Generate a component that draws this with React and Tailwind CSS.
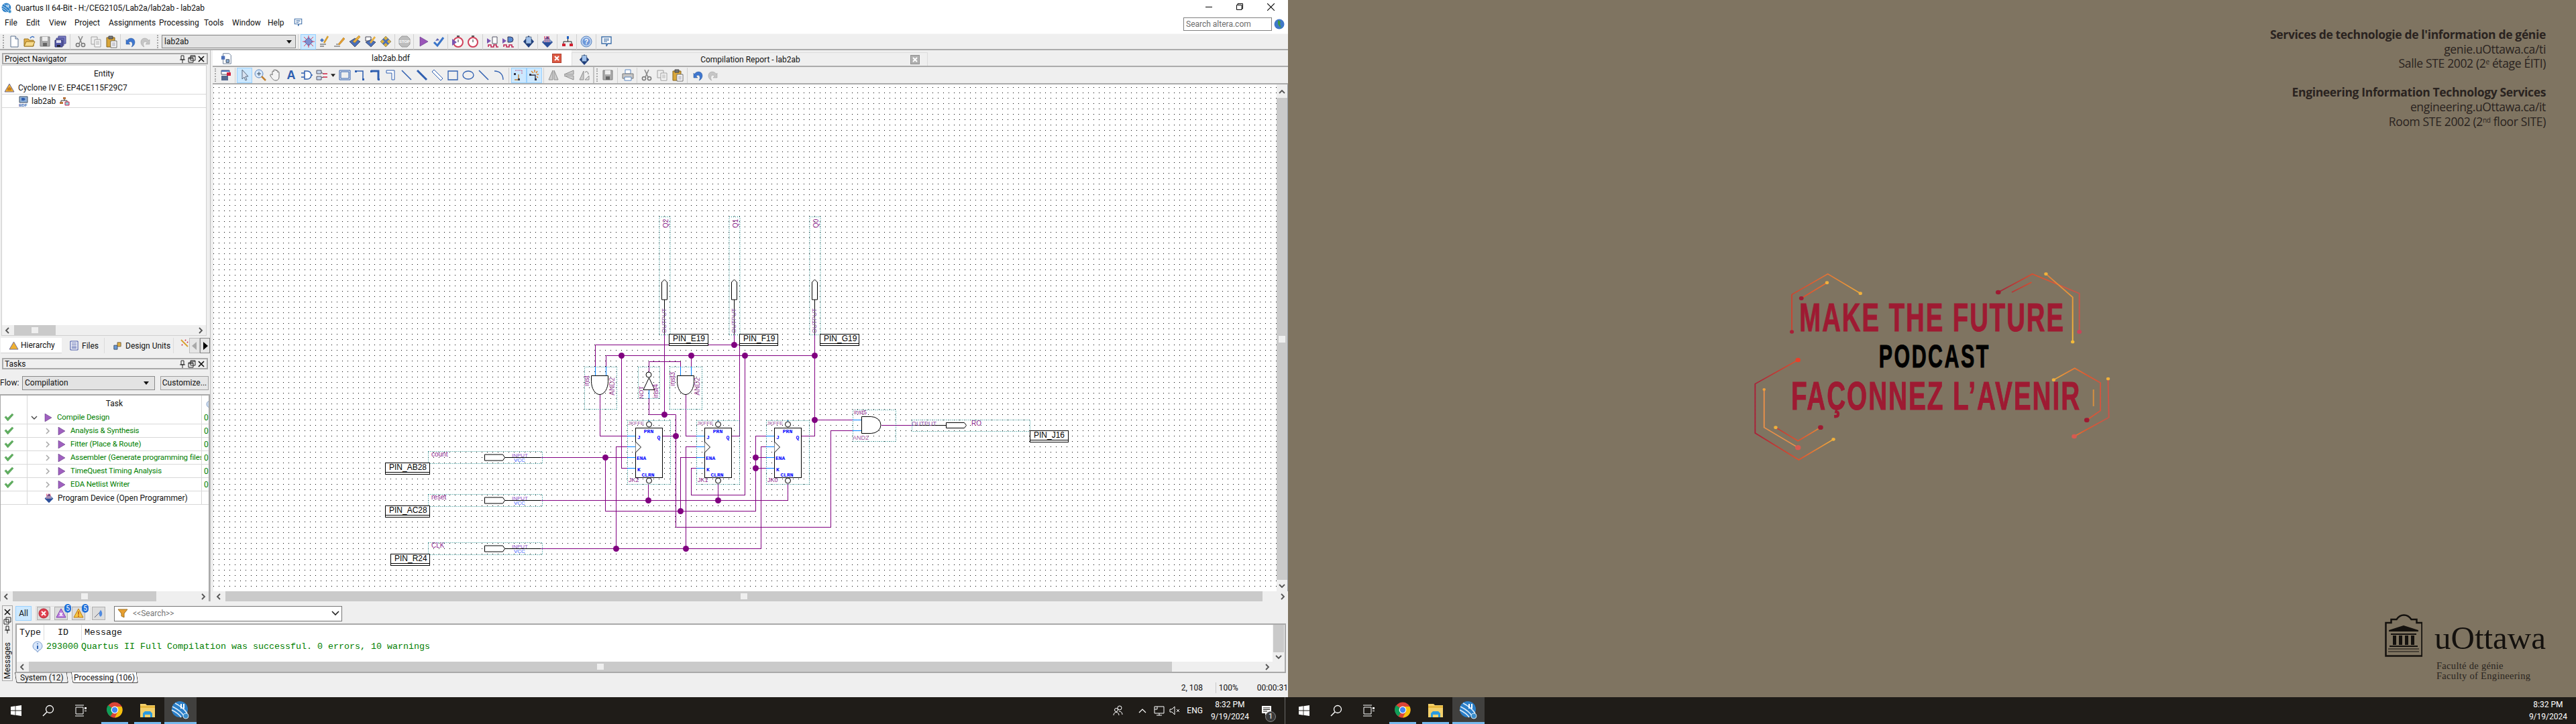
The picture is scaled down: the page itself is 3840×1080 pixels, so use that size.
import React from "react";

const WIRE = "#800080";
const PORT = "#0080ff";
const TEAL = "#008080";

const I = {
  new: <><path d="M5 2h7l4 4v12H5z" fill="#fff" stroke="#5d7390" /><path d="M12 2v4h4" fill="#dfe5ee" stroke="#5d7390" /></>,
  open: <><path d="M2 6h6l2 2h6v9H2z" fill="#e3b04b" stroke="#9a7420" /><path d="M2 17l3-7h13l-3 7z" fill="#f6d98a" stroke="#9a7420" /><path d="M11 5c2-3 4-3 6-1" fill="none" stroke="#3a6fc0" strokeWidth="1.5" /></>,
  save: <><path d="M3 3h14v14H3z" fill="#a9a9a9" stroke="#808080" /><path d="M6 3h8v6H6z" fill="#eee" /><path d="M7 12h6v5H7z" fill="#666" /></>,
  saveAll: <><path d="M7 2h11v11H7z" fill="#7c7fc4" stroke="#44478e" /><path d="M4 5h11v11H4z" fill="#6d70b8" stroke="#44478e" /><path d="M2 8h11v10H2z" fill="#5559a8" stroke="#33366e" /><path d="M4 8h7v4H4z" fill="#dde" /><path d="M5 15h5v3H5z" fill="#223" /></>,
  cut: <><path d="M7 2l5 11M13 2L8 13" stroke="#8a8a8a" strokeWidth="1.6" fill="none" /><circle cx="6" cy="15" r="2.6" fill="none" stroke="#777" strokeWidth="1.5" /><circle cx="14" cy="15" r="2.6" fill="none" stroke="#777" strokeWidth="1.5" /></>,
  copy: <><path d="M3 3h9v11H3z" fill="#eee" stroke="#a0a0a0" /><path d="M8 7h9v11H8z" fill="#f7f7f7" stroke="#a0a0a0" /><path d="M10 10h5M10 12h5M10 14h5" stroke="#b0b0b0" /></>,
  paste: <><path d="M3 4h12v14H3z" fill="#d9a63a" stroke="#86651a" /><path d="M6 2h6v4H6z" fill="#777" stroke="#444" /><path d="M9 9h9v10H9z" fill="#fff" stroke="#707070" /><path d="M11 12h5M11 14h5M11 16h5" stroke="#99a" /></>,
  undo: <path d="M5 9c3-6 12-5 12 2 0 3-2 6-5 7 2-2 2-7-1-8-2 0-3 1-3 2l2 2H4V7z" fill="#3f77d0" stroke="#2a558f" strokeWidth=".5" />,
  redo: <path d="M15 9C12 3 3 4 3 11c0 3 2 6 5 7-2-2-2-7 1-8 2 0 3 1 3 2l-2 2h6V7z" fill="#c6c6c6" stroke="#9a9a9a" strokeWidth=".5" />,
  compile: <><path d="M10 3l7 7-7 7-7-7z" fill="#5b7fc8" /><path d="M3 3l14 14M17 3L3 17M10 1v18M1 10h18" stroke="#e0405a" strokeWidth="1" /><circle cx="10" cy="10" r="4" fill="#7d8fd0" /></>,
  wand: <><path d="M7 5l-3 3 3 3 3-3z" fill="#4a78c0" /><path d="M10 12L16 2" stroke="#d8a030" strokeWidth="2.5" /><path d="M4 14h9M4 17h6" stroke="#444" /></>,
  pencil: <><path d="M8 14L16 4l2 2-8 9z" fill="#e8a030" stroke="#a87010" strokeWidth=".6" /><path d="M2 17h9M5 14h3" stroke="#555" /></>,
  chipPen: <><path d="M2 10l8-5 8 5-8 8z" fill="#4a6fb8" stroke="#223" strokeWidth=".6" /><path d="M7 10L16 1l2 2-8 9z" fill="#e8b040" stroke="#a87010" strokeWidth=".6" /></>,
  chipTag: <><path d="M3 3h8v6H3z" fill="#fff" stroke="#445" /><path d="M3 11l8-4 7 4-7 7z" fill="#4a6fb8" stroke="#223" strokeWidth=".6" /><path d="M9 11l7-9 2 2-7 9z" fill="#e8b040" /></>,
  chipGold: <><path d="M10 2l8 8-8 8-8-8z" fill="#d8b040" stroke="#665" strokeWidth=".6" /><path d="M6 6l8 8M14 6l-8 8" stroke="#4a6fb8" strokeWidth="2.5" /></>,
  stop: <><path d="M6 2h8l4 4v8l-4 4H6l-4-4V6z" fill="#bdbdbd" stroke="#9a9a9a" /><text x="10" y="12" textAnchor="middle" className="font-['Liberation_Sans'] text-[6px] font-bold fill-white">STOP</text></>,
  play: <path d="M5 3l12 7-12 7z" fill="#9a55b8" stroke="#5a3080" strokeWidth=".6" />,
  check: <><path d="M3 11l5 5L17 4" fill="none" stroke="#3a74c8" strokeWidth="3" /><path d="M5 9l3-4 3 3" fill="#5a60b0" /></>,
  timerA: <><circle cx="11" cy="11" r="7" fill="#fff" stroke="#d0405a" strokeWidth="2" /><path d="M2 6l7 5-7 5z" fill="#7a55b0" /><path d="M9 2h4" stroke="#555" strokeWidth="2" /><path d="M11 7v4" stroke="#333" /></>,
  timerB: <><circle cx="10" cy="11" r="7" fill="#fff" stroke="#d0405a" strokeWidth="2" /><path d="M8 2h4" stroke="#555" strokeWidth="2" /><path d="M10 7v4" stroke="#333" /></>,
  simA: <><path d="M1 5l6 4-6 4z" fill="#7a55b0" /><path d="M9 3h7v10H9z" fill="#fff" stroke="#556" /><path d="M3 18v-3h4v3h4v-3h4v3h3" fill="none" stroke="#c02050" strokeWidth="1.5" /></>,
  simB: <><path d="M1 5l6 4-6 4z" fill="#7a55b0" /><path d="M9 3h4a4 4 0 010 8H9z" fill="#5a8ad0" stroke="#335" /><path d="M3 18v-3h4v3h4v-3h4v3h3" fill="none" stroke="#c02050" strokeWidth="1.5" /></>,
  prog: <><path d="M10 1l8 9-8 9-8-9z" fill="#1f3f80" /><path d="M6 3h8v10H6z" fill="#9fc0ec" stroke="#345" strokeWidth=".6" /></>,
  progStripe: <><path d="M10 2l8 9-8 8-8-8z" fill="#2b4f9a" /><path d="M6 2v9M9 2v9M12 2v9" stroke="#d03060" strokeWidth="1.2" /><path d="M4 6h12v5H4z" fill="#fff" fillOpacity=".4" /></>,
  tree: <><path d="M9 2h3v4H9zM2 13h5v4H2zM13 13h5v4h-5z" fill="#d02030" /><path d="M9 2h3v4H9z" fill="#2060c0" /><path d="M10.5 6v4M4 13v-3h12v3" stroke="#222" fill="none" /></>,
  help: <><circle cx="10" cy="10" r="8" fill="#b8cfee" stroke="#5b85c0" /><circle cx="10" cy="10" r="5.5" fill="#6d97d8" /><text x="10" y="13.5" textAnchor="middle" className="font-['Liberation_Sans'] text-[10px] font-bold fill-white">?</text></>,
  chat: <><path d="M3 3h14v10h-5l-2 4v-4H3z" fill="#fff" stroke="#3d6ea8" strokeWidth="1.4" /><path d="M6 6h8M6 8h8M6 10h5" stroke="#3d6ea8" /></>,
  docChip: <><path d="M4 2h10l3 3v14H4z" fill="#fff" stroke="#5d7390" /><path d="M1 6h6v6H1z" fill="#4a6fb8" /><path d="M9 12h5v5H9z" fill="#8fb0d8" stroke="#345" /></>,
  schemSave: <><path d="M3 3h12v6H3z" fill="#fff" stroke="#556" /><path d="M3 3h12v2H3z" fill="#4a6fb8" /><path d="M11 6h6v5h-6z" fill="#d02040" /><path d="M3 11h10v7H3z" fill="#556a90" /></>,
  arrow: <path d="M6 2v14l3-3 2 5 2-1-2-5h4z" fill="#d8e2f0" stroke="#5a6a80" />,
  zoom: <><circle cx="8" cy="8" r="6" fill="#d8e8fb" stroke="#5a86c0" /><path d="M5 8h6M8 5v6" stroke="#345" /><path d="M12 12l6 6" stroke="#c08030" strokeWidth="2.5" /></>,
  hand: <path d="M5 10V5a1 1 0 012 0V3a1 1 0 012 0V3a1 1 0 012 0v1a1 1 0 012 0v2a1 1 0 012 0v7c0 3-2 5-5 5-4 0-6-4-8-7-1-2 1-3 3-1z" fill="#f4f4f4" stroke="#6c6c6c" />,
  letter: <text x="10" y="16" textAnchor="middle" className="font-['Liberation_Sans'] text-[18px] font-bold fill-[#2f5fb0]">A</text>,
  gate: <><path d="M7 4h4a6 6 0 010 12H7z" fill="#fff" stroke="#2f5fb0" strokeWidth="1.5" /><path d="M2 7h5M2 13h5M17 10h2" stroke="#2f5fb0" strokeWidth="1.5" /></>,
  blocks: <><path d="M2 3h7v5H2zM2 12h7v5H2z" fill="#c8d8ee" stroke="#556" /><path d="M11 8h7" stroke="#d02040" strokeWidth="1.5" /><path d="M11 13h7" stroke="#d02040" strokeWidth="1.5" /><path d="M9 6l3 2M9 14l3-1" stroke="#556" /></>,
  symbol: <><path d="M2 3h16v14H2z" fill="none" stroke="#2f5fb0" /><path d="M4 5h12v10H4z" fill="none" stroke="#2f5fb0" /></>,
  ortho: <><path d="M3 4h11v13" fill="none" stroke="#2f5fb0" strokeWidth="1.5" /><path d="M2 3h3v3H2zM13 15h3v3h-3z" fill="#2f5fb0" /></>,
  orthoB: <><path d="M3 4h11v13" fill="none" stroke="#2f5fb0" strokeWidth="3" /><path d="M2 3h3v3H2zM13 15h3v3h-3z" fill="#2f5fb0" /></>,
  orthoC: <><path d="M3 3h12v14h-4V7H3z" fill="#fff" stroke="#2f5fb0" /></>,
  diag: <path d="M3 3l14 14" stroke="#2f5fb0" strokeWidth="1.5" />,
  diagB: <path d="M3 3l14 14" stroke="#2f5fb0" strokeWidth="3" />,
  diagC: <path d="M2 5l3-3 13 13-3 3z" fill="#fff" stroke="#2f5fb0" />,
  rect: <path d="M3 4h14v13H3z" fill="none" stroke="#2f5fb0" strokeWidth="1.3" />,
  ell: <ellipse cx="10" cy="10" rx="8" ry="6" fill="none" stroke="#2f5fb0" strokeWidth="1.3" />,
  arc: <path d="M3 4c8 0 13 5 13 13" fill="none" stroke="#2f5fb0" strokeWidth="1.3" />,
  rubber: <><path d="M4 3h10v6" fill="none" stroke="#c02050" strokeDasharray="1 1" /><path d="M9 9v8H3" fill="none" stroke="#c08030" strokeWidth="1.4" /><path d="M2 7h3v3H2zM8 15h3v3H8z" fill="#334" /></>,
  partial: <><path d="M3 10h8v8" fill="none" stroke="#334" strokeWidth="1.4" /><path d="M2 8h3v3H2zM10 15h3v3h-3z" fill="#334" /><path d="M10 2v4M14 4l-2 3M16 9h-3M15 14l-2-2M5 4l3 3" stroke="#e08020" strokeWidth="1.4" /></>,
  flipH: <path d="M9 3v14H3zM11 3v14h6z" fill="#ccc" stroke="#909090" />,
  flipV: <path d="M17 3v6H3zM17 17v-6H3z" fill="#ccc" stroke="#909090" />,
  rotate: <><path d="M9 4v13H3z" fill="#ccc" stroke="#909090" /><path d="M17 17h-6l6-6z" fill="#ddd" stroke="#909090" /><path d="M11 6c3-3 5 0 5 3" fill="none" stroke="#777" /></>,
  print: <><path d="M6 2h8v6H6z" fill="#fff" stroke="#5a86c0" /><path d="M2 8h16v7H2z" fill="#c6c6c6" stroke="#777" /><path d="M5 13h10v5H5z" fill="#fff" stroke="#5a86c0" /></>,
};

const Icon = ({ name, className = "w-5 h-5" }) => (
  <svg viewBox="0 0 20 20" className={className}>{I[name]}</svg>
);

const Tool = ({ name, active }) => (
  <div className={`w-[23px] h-[23px] shrink-0 flex items-center justify-center border ${active ? "bg-[#cce8ff] border-[#99d1ff]" : "border-transparent"}`}>
    <Icon name={name} />
  </div>
);

const Sep = ({ wide }) => (
  <div className={`${wide ? "w-[7px]" : "w-[5px]"} h-[23px] shrink-0 flex justify-center`}>
    <div className="w-px h-full bg-[#d0d0d0]" />
  </div>
);

const Grip = ({ className = "" }) => (
  <div className={`w-[2px] h-[20px] shrink-0 border-l-2 border-dotted border-[#a8a8a8] ${className}`} />
);

const PanelHead = ({ title }) => (
  <div className="flex items-center h-[17px] mx-[3px] pl-[2px] pr-[2px] border-2 border-[#a9a9a9] bg-[#efefef]">
    <span className="flex-1 text-[12px] leading-none">{title}</span>
    <DockIcons />
  </div>
);

const DockIcons = () => (
  <div className="flex items-center gap-[2px] h-3">
    <svg viewBox="0 0 12 12" className="w-3 h-3"><path d="M4 1h4v6H4zM2 7h8M6 7v5" fill="none" stroke="#222" /></svg>
    <svg viewBox="0 0 12 12" className="w-3 h-3"><path d="M4 1h7v7H4zM1 4h7v7H1z" fill="#efefef" stroke="#222" /><path d="M1 5h7M4 2h7" stroke="#222" /></svg>
    <svg viewBox="0 0 12 12" className="w-3 h-3"><path d="M2 2l8 8M10 2l-8 8" stroke="#111" strokeWidth="1.7" /></svg>
  </div>
);

const GreenCheck = () => (
  <svg viewBox="0 0 16 14" className="w-[15px] h-[13px]">
    <path d="M1 7l2-2 3 3 7-7 2 2-9 10z" fill="#5fae5f" stroke="#3f8f3f" strokeWidth=".5" />
  </svg>
);

const PlayTri = () => (
  <svg viewBox="0 0 12 12" className="w-[12px] h-[12px] shrink-0">
    <path d="M1 0l10 6-10 6z" fill="#a060c0" stroke="#4e2a70" strokeWidth=".5" />
  </svg>
);

const tasks = [
  { name: "Compile Design", top: true },
  { name: "Analysis & Synthesis" },
  { name: "Fitter (Place & Route)" },
  { name: "Assembler (Generate programming files)" },
  { name: "TimeQuest Timing Analysis" },
  { name: "EDA Netlist Writer" },
];

const TaskRow = ({ t }) => (
  <div className="flex h-5 border-b border-[#d8d8d8]">
    <div className="w-[40px] shrink-0 border-r border-[#d8d8d8] flex items-center pl-[5px]"><GreenCheck /></div>
    <div className={`w-[260px] shrink-0 border-r border-[#d8d8d8] flex items-center whitespace-nowrap text-[#008000] text-[11.5px] tracking-[-0.15px] overflow-hidden ${t.top ? "pl-[5px]" : "pl-[25px]"}`}>
      <svg viewBox="0 0 10 10" className="w-[10px] h-[10px] shrink-0 mr-[10px]">
        {t.top ? <path d="M1 3l4 4 4-4" fill="none" stroke="#444" strokeWidth="1.4" /> : <path d="M3 1l4 4-4 4" fill="none" stroke="#aaa" strokeWidth="1.6" />}
      </svg>
      <PlayTri />
      <span className="ml-[7px]">{t.name}</span>
    </div>
    <div className="flex-1 overflow-hidden pl-[3px] text-[#008000] flex items-center">00</div>
  </div>
);

const Scroll = ({ className = "", thumb = "", grip = true }) => (
  <div className={`h-[15px] flex items-center bg-[#efefef] ${className}`}>
    <svg viewBox="0 0 10 10" className="w-[10px] h-[10px] mx-[3px] shrink-0"><path d="M7 1L3 5l4 4" fill="none" stroke="#555" strokeWidth="1.8" /></svg>
    <div className={`h-full bg-[#cacaca] flex items-center justify-center ${thumb}`}>
      {grip && <div className="w-[10px] h-[9px] bg-[#efefef]" />}
    </div>
    <div className="flex-1" />
    <svg viewBox="0 0 10 10" className="w-[10px] h-[10px] mx-[3px] shrink-0"><path d="M3 1l4 4-4 4" fill="none" stroke="#555" strokeWidth="1.8" /></svg>
  </div>
);

const WinLogo = () => (
  <svg viewBox="0 0 16 16" className="w-4 h-4"><path d="M0 2.2l6.6-.9v6.3H0zM7.4 1.2L16 0v7.6H7.4zM0 8.4h6.6v6.3L0 13.8zM7.4 8.4H16V16l-8.6-1.2z" fill="#fff" /></svg>
);

const Chrome = () => (
  <svg viewBox="0 0 24 24" className="w-6 h-6">
    <circle cx="12" cy="12" r="11.5" fill="#db4437" />
    <path d="M12 12L3 19a11.5 11.5 0 01-1-14z" fill="#0f9d58" />
    <path d="M2.2 5.8L12 12l-6.4 9.5A11.5 11.5 0 012.2 5.8z" fill="#0f9d58" />
    <path d="M12 7h10.5A11.5 11.5 0 0112 23.5L17 14z" fill="#f4c20d" />
    <circle cx="12" cy="12" r="5.4" fill="#fff" />
    <circle cx="12" cy="12" r="4.2" fill="#4285f4" />
  </svg>
);

const Folder = () => (
  <svg viewBox="0 0 24 24" className="w-6 h-6">
    <path d="M1 3h8l2 2h12v18H1z" fill="#f3d06b" />
    <path d="M1 6h22v3H1z" fill="#e8b83f" />
    <path d="M8 14h8l3 3v6h-3v-4H8v4H5v-6z" fill="#2b9be0" />
  </svg>
);

const QuartusLogo = ({ className = "w-7 h-7" }) => (
  <svg viewBox="0 0 28 28" className={className}>
    <circle cx="13" cy="13" r="12" fill="#2b7fc8" />
    <path d="M2 9c8 4 14 8 18 15M1 14c6 3 11 6 14 11M6 4c8 4 14 9 18 15" fill="none" stroke="#dfeefa" strokeWidth="1.5" />
    <path d="M14 5h2v7h-2zM18 5h2v7h-2z" fill="#fff" />
    <circle cx="22" cy="23" r="4" fill="#3a8cc8" stroke="#cfe6f6" />
  </svg>
);

const SearchGlass = () => (
  <svg viewBox="0 0 18 18" className="w-[18px] h-[18px]"><circle cx="11" cy="7" r="5.5" fill="none" stroke="#fff" strokeWidth="1.3" /><path d="M7 11l-6 6" stroke="#fff" strokeWidth="1.5" /></svg>
);

const TaskView = () => (
  <svg viewBox="0 0 18 18" className="w-[18px] h-[18px]"><path d="M2 4h11v10H2zM1 1h13M1 17h13" fill="none" stroke="#fff" /><path d="M15 4h3v3h-3zM15 9h3v1h-3z" fill="#fff" /></svg>
);

const TaskApps = () => (
  <div className="flex h-full">
    <div className="w-[48px] flex items-center justify-center"><WinLogo /></div>
    <div className="w-[48px] flex items-center justify-center"><SearchGlass /></div>
    <div className="w-[48px] flex items-center justify-center"><TaskView /></div>
    <div className="w-[40px] ml-[7px] flex items-center justify-center border-b-[3px] border-[#76b9ed]"><Chrome /></div>
    <div className="w-[40px] ml-[9px] flex items-center justify-center border-b-[3px] border-[#76b9ed]"><Folder /></div>
    <div className="w-[48px] ml-[5px] flex items-center justify-center border-b-[3px] border-[#76b9ed] bg-[#41403e]"><QuartusLogo /></div>
  </div>
);

const Clock = () => (
  <div className="flex flex-col items-center text-white text-[12px] leading-[18px]">
    <span>8:32 PM</span>
    <span>9/19/2024</span>
  </div>
);

/* ---------- schematic ---------- */

const Wire = ({ d, c = WIRE }) => <path d={d} fill="none" stroke={c} strokeWidth="1" />;
const Dot = ({ x, y }) => <circle cx={x} cy={y} r="4.5" fill={WIRE} />;
const Dotted = ({ x, y, w, h }) => (
  <rect x={x + 0.5} y={y + 0.5} width={w} height={h} fill="none" stroke={TEAL} strokeWidth="1" strokeDasharray="1 2" />
);
const Lbl = ({ x, y, children, rot, anchor, cls = "fill-[#8e2a8e] text-[10px]" }) => (
  <text x={x} y={y} textAnchor={anchor} transform={rot ? `rotate(-90 ${x} ${y})` : undefined} className={`font-['Liberation_Sans'] ${cls}`}>{children}</text>
);

const PinBox = ({ x, y, w, label }) => (
  <g>
    <rect x={x + 0.5} y={y + 0.5} width={w} height={17} fill="#fff" stroke="#000" />
    <path d={`M${x} ${y + 14.5}h${w}`} stroke="#000" />
    <text x={x + 6} y={y + 11} className="font-['Liberation_Sans'] text-[12px] fill-black">{label}</text>
  </g>
);

const AndV = ({ x, lbl, lblX }) => (
  <g>
    <path d={`M${x + 0.5} 560.5h25v8a12.5 20 0 01-25 0z`} fill="#fff" stroke="#000" />
    <Lbl x={x - 3} y={576} rot>{lbl}</Lbl>
    <Lbl x={lblX} y={563} rot anchor="end" cls="fill-[#a055a0] text-[10px]">AND2</Lbl>
  </g>
);

const OutPin = ({ x, name }) => (
  <g>
    <Dotted x={x - 8} y={323} w={16} h={176} />
    <Lbl x={x + 5} y={340} rot>{name}</Lbl>
    <path d={`M${x} 447v52`} stroke="#000" />
    <path d={`M${x - 4} 447v-26l4-4 4 4v26z`} fill="#fff" stroke="#000" />
    <Lbl x={x + 2} y={497} rot cls="fill-[#9050a8] text-[9px]">OUTPUT</Lbl>
  </g>
);

const InPin = ({ y, name }) => (
  <g>
    <Dotted x={638} y={y - 9} w={170} h={18} />
    <Lbl x={643} y={y - 1}>{name}</Lbl>
    <path d={`M752 ${y + 0.5}h54`} stroke="#000" />
    <path d={`M722.5 ${y - 4}h27l3 4.5-3 4.5h-27z`} fill="#fff" stroke="#000" />
    <Lbl x={763} y={y} cls="fill-[#9050c8] text-[8px]">INPUT</Lbl>
    <Lbl x={766} y={y + 7} cls="fill-[#4060ff] text-[8px]">VCC</Lbl>
  </g>
);

const PortTxt = ({ x, y, anchor, children }) => (
  <text x={x} y={y} textAnchor={anchor} className="font-['Liberation_Mono'] font-bold text-[8px] fill-[#0000ff]">{children}</text>
);

const JK = ({ x, name }) => (
  <g>
    <Dotted x={x - 12} y={627} w={64} h={95} />
    <Wire c={PORT} d={`M${x - 12} 650.5h12M${x - 12} 666.5h12M${x - 12} 682.5h12M${x - 12} 698.5h12`} />
    <Wire c={PORT} d={`M${x + 20.5} 627v2`} />
    <rect x={x + 0.5} y={638.5} width={40} height={74} fill="#fff" stroke="#000" />
    <circle cx={x + 20.5} cy={633} r="4" fill="#fff" stroke="#000" />
    <circle cx={x + 20.5} cy={717} r="4" fill="#fff" stroke="#000" />
    <path d={`M${x + 0.5} 659l8 8-8 8`} fill="#fff" stroke="#000" />
    <Lbl x={x - 11} y={634} cls="fill-[#a055a0] text-[8px]">JKFFE</Lbl>
    <PortTxt x={x + 20} y={646} anchor="middle">PRN</PortTxt>
    <PortTxt x={x + 3} y={655}>J</PortTxt>
    <PortTxt x={x + 35} y={655} anchor="middle">Q</PortTxt>
    <PortTxt x={x + 2} y={686}>ENA</PortTxt>
    <PortTxt x={x + 3} y={703}>K</PortTxt>
    <PortTxt x={x + 19} y={711} anchor="middle">CLRN</PortTxt>
    <Lbl x={x - 10} y={719} cls="fill-[#8e2a8e] text-[9px]">{name}</Lbl>
  </g>
);

const Schematic = () => (
  <svg viewBox="318 126 1585 755" className="absolute inset-0 w-[1585px] h-[755px]">
    <OutPin x={990.5} name="Q2" />
    <OutPin x={1094.5} name="Q1" />
    <OutPin x={1214.5} name="Q0" />

    <Wire d="M887.5 547V514.5H1102.5M903.5 547V530.5H1214.5M990.5 499V618M1094.5 499V514M1102.5 514V650.5H1090" />
    <Wire d="M926.5 530V698.5H935M1030.5 530V547M1110.5 530V738.5H1030.5V698.5H1038" />
    <Wire d="M967.5 539.5H1014.5V547M967.5 539.5V555M967.5 594V618.5H1007.5V786.5H1238.5V642.5H1271M1214.5 499V650.5H1194" />
    <Wire d="M987 650.5H1007.5M894.5 589V650.5H935M1022.5 589V650.5H1038" />
    <Wire d="M806 682.5H935M902.5 682V762.5H1126.5V650.5H1142M1014.5 762V682.5H1038M1126.5 682.5H1142M1126.5 698.5H1142" />
    <Wire d="M806 746.5H1174.5V722M966.5 746V722M1070.5 746V722" />
    <Wire d="M806 818.5H1134.5V666.5H1142M918.5 818V666.5H935M1022.5 818V666.5H1038" />
    <Wire d="M1214.5 626.5H1271" />
    <Wire d="M1314 634.5H1360" />

    <Dot x={926.5} y={530.5} /><Dot x={1030.5} y={530.5} /><Dot x={1110.5} y={530.5} /><Dot x={1214.5} y={530.5} />
    <Dot x={1094.5} y={514.5} /><Dot x={990.5} y={618.5} /><Dot x={1007.5} y={650.5} />
    <Dot x={902.5} y={682.5} /><Dot x={966.5} y={746.5} /><Dot x={1070.5} y={746.5} />
    <Dot x={1014.5} y={762.5} /><Dot x={918.5} y={818.5} /><Dot x={1022.5} y={818.5} />
    <Dot x={1214.5} y={626.5} /><Dot x={1126.5} y={682.5} /><Dot x={1126.5} y={698.5} />

    {/* AND gates above the flip flops */}
    <Dotted x={871} y={547} w={48} h={63} />
    <Wire c={PORT} d="M887.5 547v13M903.5 547v13" />
    <AndV x={881} lbl="inst" lblX={916} />
    <Dotted x={998} y={547} w={48} h={63} />
    <Wire c={PORT} d="M1014.5 547v13M1030.5 547v13" />
    <AndV x={1009} lbl="inst3" lblX={1043} />

    {/* inverter */}
    <Dotted x={951} y={547} w={32} h={47} />
    <circle cx={967} cy={559} r="4" fill="#fff" stroke="#000" />
    <path d="M967.5 563.5l8.5 18h-17z" fill="#fff" stroke="#000" />
    <Wire c={PORT} d="M967.5 582v12" />
    <Lbl x={959} y={595} rot cls="fill-[#8e2a8e] text-[9px]">NOT</Lbl>
    <Lbl x={981} y={594} rot>inst4</Lbl>

    <JK x={947} name="JK2" />
    <JK x={1050} name="JK1" />
    <JK x={1154} name="JK0" />

    {/* output AND */}
    <Dotted x={1271} y={611} w={64} h={47} />
    <Wire c={PORT} d="M1271 626.5h13M1271 642.5h13" />
    <path d="M1284.5 621.5h14a14.5 12.5 0 010 25h-14z" fill="#fff" stroke="#000" />
    <Lbl x={1273} y={618} cls="fill-[#8e2a8e] text-[9px]">inst5</Lbl>
    <Lbl x={1271} y={656} cls="fill-[#a055a0] text-[9px]">AND2</Lbl>
    <Dotted x={1359} y={626} w={176} h={17} />
    <path d="M1360 634.5h50" stroke="#000" />
    <path d="M1410.5 630.5h27l3 4-3 4h-27z" fill="#fff" stroke="#000" />
    <Lbl x={1359} y={635} cls="fill-[#9050a8] text-[9px]">OUTPUT</Lbl>
    <Lbl x={1448} y={635}>RO</Lbl>

    <InPin y={682} name="count" />
    <InPin y={746} name="reset" />
    <InPin y={818} name="CLK" />

    <PinBox x={997} y={498} w={58} label="PIN_E19" />
    <PinBox x={1102} y={498} w={57} label="PIN_F19" />
    <PinBox x={1222} y={498} w={58} label="PIN_G19" />
    <PinBox x={1535} y={642} w={57} label="PIN_J16" />
    <PinBox x={574} y={690} w={66} label="PIN_AB28" />
    <PinBox x={574} y={754} w={66} label="PIN_AC28" />
    <PinBox x={582} y={826} w={58} label="PIN_R24" />
  </svg>
);

/* ---------- right pane ---------- */

const Circuit = () => (
  <svg viewBox="0 0 1568 960" preserveAspectRatio="none" className="absolute inset-0 w-full h-full">
    <defs>
      <linearGradient id="hot" gradientUnits="userSpaceOnUse" x1="90" y1="0" x2="520" y2="0">
        <stop offset="0" stopColor="#9e1a32" /><stop offset=".5" stopColor="#e0562f" /><stop offset="1" stopColor="#f0b03c" />
      </linearGradient>
      <linearGradient id="hotR" gradientUnits="userSpaceOnUse" x1="1040" y1="0" x2="1360" y2="0">
        <stop offset="0" stopColor="#a0243a" /><stop offset=".5" stopColor="#e0562f" /><stop offset="1" stopColor="#c9544a" />
      </linearGradient>
      <linearGradient id="gold" gradientUnits="userSpaceOnUse" x1="1230" y1="70" x2="1330" y2="370">
        <stop offset="0" stopColor="#e0803a" /><stop offset="1" stopColor="#f4bb3a" />
      </linearGradient>
      <linearGradient id="low" gradientUnits="userSpaceOnUse" x1="90" y1="0" x2="400" y2="0">
        <stop offset="0" stopColor="#a81f38" /><stop offset=".6" stopColor="#e0562f" /><stop offset="1" stopColor="#f0b03c" />
      </linearGradient>
      <linearGradient id="lowR" gradientUnits="userSpaceOnUse" x1="1250" y1="0" x2="1480" y2="0">
        <stop offset="0" stopColor="#f0b03c" /><stop offset=".6" stopColor="#e0562f" /><stop offset="1" stopColor="#c9544a" />
      </linearGradient>
    </defs>
    <g fill="none" strokeWidth="5">
      <path d="M238 327V160L378 68l127 87" stroke="url(#hot)" />
      <path d="M275 177l100-70" stroke="url(#hot)" />
      <path d="M1042 150l133-82 183 87v172" stroke="url(#hotR)" />
      <path d="M1228 68l104 104v200" stroke="url(#gold)" />
      <path d="M1095 150l77-45" stroke="url(#hotR)" />
      <path d="M262 453L95 560v220l170 120 135-92" stroke="url(#low)" />
      <path d="M130 585v170l132 90" stroke="#e8904a" />
      <path d="M175 755l87 60 88-60" stroke="url(#low)" />
      <path d="M1258 542l82-52 100 65v125l-53 42" stroke="url(#lowR)" />
      <path d="M1470 537l3 173-135 85" stroke="url(#lowR)" />
      <path d="M1413 585v75" stroke="#d89040" />
    </g>
    {[
      [238, 327, "#a81f38", 8], [505, 155, "#f0b03c", 7], [275, 177, "#a01c36", 9], [375, 107, "#f0b03c", 7],
      [1042, 150, "#9e1a32", 10], [1358, 327, "#c9445a", 9], [1228, 68, "#f0b03c", 7], [1332, 372, "#f4bb3a", 7],
      [262, 453, "#e8402a", 10], [400, 808, "#f0b03c", 7], [130, 585, "#f0a03c", 6], [262, 845, "#d85a50", 11],
      [175, 755, "#f0b03c", 7], [350, 755, "#9e1a32", 10], [1258, 542, "#f0b03c", 7], [1387, 722, "#9e1a32", 10],
      [1470, 537, "#f0b03c", 7], [1338, 795, "#d85a50", 10],
    ].map(([x, y, c, r]) => <circle key={`${x}-${y}`} cx={x} cy={y} r={r} fill={c} />)}
  </svg>
);

const Podcast = () => (
  <div className="relative w-[600px] h-[320px] ml-[660px] mt-[194px] shrink-0 flex flex-col items-center font-['Liberation_Sans'] font-bold whitespace-nowrap">
    <Circuit />
    <div className="relative mt-[58px] h-[52px] text-[60px] leading-[60px] text-[#9e1a32] [-webkit-text-stroke:1px_#9e1a32] tracking-[3px] scale-x-[0.64]">MAKE THE FUTURE</div>
    <div className="relative mt-[9px] ml-[8px] h-[52px] text-[49px] leading-[52px] text-black [-webkit-text-stroke:1px_#000] tracking-[4px] scale-x-[0.62]">PODCAST</div>
    <div className="relative mt-[4px] ml-[12px] h-[52px] text-[60px] leading-[60px] text-[#9e1a32] [-webkit-text-stroke:1px_#9e1a32] tracking-[3px] scale-x-[0.645]">FAÇONNEZ L’AVENIR</div>
  </div>
);

const OttawaMark = () => (
  <svg viewBox="0 0 56 64" className="w-[56px] h-[64px] shrink-0 -mt-[7px]">
    <path d="M1.5 62.500V13h8V8h8c3-4.500 7-6.500 11-6.500s8 2 11 6.500h8v5h8v49.500z" fill="none" stroke="#14110e" strokeWidth="2.5" />
    <path d="M6 24L28 17l22 7v2H6z" fill="#14110e" />
    <path d="M9 29h38v2H9zM7 47h42v2H7z" fill="#14110e" />
    <path d="M12 32h5v14h-5zM21 32h5v14h-5zM30 32h5v14h-5zM39 32h5v14h-5z" fill="#14110e" />
    <path d="M5 52h46M5 56h46" stroke="#14110e" />
  </svg>
);

const Ottawa = () => (
  <div className="flex gap-[18px] self-end mr-[45px] mt-auto mb-[24px] text-[#14110e] font-['Liberation_Serif']">
    <OttawaMark />
    <div className="flex flex-col -mt-[1px]">
      <div className="text-[49px] leading-[60px] whitespace-nowrap">uOttawa</div>
      <div className="ml-[3px] mt-[4px] text-[14.5px] leading-[15px] tracking-[0.3px] text-[#2a2520]">Faculté de génie</div>
      <div className="ml-[3px] text-[14.5px] leading-[15px] tracking-[0.3px] text-[#2a2520]">Faculty of Engineering</div>
    </div>
  </div>
);

const InfoBlock = () => (
  <div className="flex flex-col items-end pt-[41px] pr-[45px] text-[17.5px] leading-[21.6px] text-[#2a2320] font-['Open_Sans'] tracking-[-0.35px] whitespace-nowrap">
    <b>Services de technologie de l'information de génie</b>
    <span>genie.uOttawa.ca/ti</span>
    <span>Salle STE 2002 (2<sup className="text-[10px]">e</sup> étage ÉITI)</span>
    <b className="mt-[21.6px]">Engineering Information Technology Services</b>
    <span>engineering.uOttawa.ca/it</span>
    <span>Room STE 2002 (2<sup className="text-[10px]">nd</sup> floor SITE)</span>
  </div>
);

const menus = [
  ["File", "w-[32px]"],
  ["Edit", "w-[34px]"],
  ["View", "w-[38px]"],
  ["Project", "w-[51px]"],
  ["Assignments", "w-[75px]"],
  ["Processing", "w-[67px]"],
  ["Tools", "w-[42px]"],
  ["Window", "w-[53px]"],
  ["Help", "w-[38px]"],
];

export default function App() {
  return (
    <div className="flex w-[3840px] h-[1080px] overflow-hidden font-['Roboto'] text-[12px] text-[#111]">
      {/* left screen */}
      <div className="w-[1920px] h-full shrink-0 flex flex-col">
        <div className="flex-1 min-h-0 flex flex-col bg-[#efefef] overflow-hidden">
          <div className="h-6 bg-white flex items-center pl-[2px] shrink-0 tracking-[-0.08px]">
            <QuartusLogo className="w-4 h-4" />
            <span className="ml-[5px]">Quartus II 64-Bit - H:/CEG2105/Lab2a/lab2ab - lab2ab</span>
            <div className="ml-auto flex items-center mr-[20px] gap-[36px] -mt-[4px]">
              <div className="w-[10px] h-px bg-black" />
              <svg viewBox="0 0 10 10" className="w-[10px] h-[10px]"><path d="M2 2V.5h7.500V8H8M.5 2.500H8v7H.5z" fill="none" stroke="#000" /></svg>
              <svg viewBox="0 0 10 10" className="w-[11px] h-[11px]"><path d="M0 0l10 10M10 0L0 10" stroke="#000" /></svg>
            </div>
          </div>
          <div className="h-[26px] bg-white flex items-center pl-[7px] shrink-0 relative">
            {menus.map(([m, w]) => <span key={m} className={`${w} shrink-0 -mt-[6px]`}>{m}</span>)}
            <Icon name="chat" className="w-[15px] h-[15px] -mt-[8px]" />
            <div className="ml-auto flex items-center pr-[5px] -mt-[2px]">
              <div className="w-[132px] h-[20px] border border-[#808080] pl-[3px] text-[#6d6d6d] flex items-center">Search altera.com</div>
              <svg viewBox="0 0 16 16" className="w-4 h-4 ml-[3px]"><circle cx="8" cy="8" r="7.500" fill="#3f78c8" /><path d="M6 2l4 2-1 4 2 6-3-3-2-3z" fill="#3f9a3f" /></svg>
            </div>
          </div>
          {/* main toolbar */}
          <div className="h-[25px] flex items-center pl-[4px] border-b-2 border-[#ababab] shrink-0 border-t border-t-[#f7f7f7]">
            <Grip className="mr-[3px]" />
            <Tool name="new" /><Tool name="open" /><Tool name="save" /><Tool name="saveAll" /><Sep wide />
            <Tool name="cut" /><Tool name="copy" /><Tool name="paste" /><Sep />
            <Tool name="undo" /><Tool name="redo" />
            <Grip className="ml-[6px] mr-[5px]" />
            <div className="w-[200px] h-[20px] shrink-0 border border-[#8a8a8a] bg-[#e3e3e3] flex items-center pl-[3px] pr-[5px]">
              <span className="flex-1">lab2ab</span>
              <svg viewBox="0 0 8 5" className="w-[8px] h-[5px]"><path d="M0 0h8L4 5z" fill="#111" /></svg>
            </div>
            <Sep wide />
            <Tool name="compile" active /><Tool name="wand" /><Tool name="pencil" /><Tool name="chipPen" /><Tool name="chipTag" /><Tool name="chipGold" /><Sep />
            <Tool name="stop" /><Sep />
            <Tool name="play" /><Tool name="check" /><Sep />
            <Tool name="timerA" /><Tool name="timerB" /><Sep wide />
            <Tool name="simA" /><Tool name="simB" /><Sep wide />
            <Tool name="prog" /><Sep />
            <Tool name="progStripe" /><Sep wide />
            <Tool name="tree" /><Sep />
            <Tool name="help" /><Sep wide />
            <Tool name="chat" />
          </div>
          {/* work area */}
          <div className="h-[822px] shrink-0 flex">
            {/* left docks */}
            <div className="w-[314px] shrink-0 flex flex-col pt-[4px] border-r border-[#bdbdbd]">
              <PanelHead title="Project Navigator" />
              <div className="mt-[1px] ml-[2px] mr-[5px] h-[404px] bg-white border border-[#d0d0d0] flex flex-col">
                <div className="h-[23px] flex items-center justify-center">Entity</div>
                <div className="h-[20px] flex items-center border-b border-[#d8d8d8] pl-[3px]">
                  <svg viewBox="0 0 16 14" className="w-4 h-[14px]"><path d="M8 1l7 12H1z" fill="#f0b030" stroke="#6a6a9a" /><path d="M6 11V7M8 11V6M10 11V7" stroke="#a05010" /></svg>
                  <span className="ml-[5px]">Cyclone IV E: EP4CE115F29C7</span>
                </div>
                <div className="h-[20px] flex items-center border-b border-[#d8d8d8] pl-[25px]">
                  <svg viewBox="0 0 14 16" className="w-[14px] h-4"><path d="M1 1h12v9H1z" fill="#8fb0d8" stroke="#456" /><path d="M4 3h4l2 2-2 2H4z" fill="#2f5fb0" /><text x="0" y="16" className="font-['Liberation_Sans'] text-[6px] font-bold fill-[#2f5fb0]">BDF</text></svg>
                  <span className="ml-[5px]">lab2ab</span>
                  <svg viewBox="0 0 16 14" className="w-4 h-[14px] ml-[5px]"><path d="M6 1h4v3H6zM1 8h5v3H1z" fill="#b8743c" /><path d="M8 4v2M3 8V6h9v2" stroke="#333" fill="none" /><path d="M9 8h6v5H9z" fill="#8fd0d8" stroke="#d02050" /></svg>
                </div>
                <div className="flex-1" />
                <Scroll thumb="w-[62px] ml-[2px]" />
              </div>
              {/* nav tabs */}
              <div className="h-[23px] mt-[3px] flex items-stretch relative">
                <div className="w-[91px] ml-[1px] bg-white flex items-center pl-[12px] border-b border-[#d0d0d0]">
                  <svg viewBox="0 0 16 14" className="w-[15px] h-[13px]"><path d="M8 1l7 12H1z" fill="#f0b030" stroke="#6a6a9a" /></svg>
                  <span className="ml-[3px]">Hierarchy</span>
                </div>
                <div className="w-[64px] flex items-center pl-[12px] border-r border-[#dcdcdc]">
                  <svg viewBox="0 0 14 16" className="w-[13px] h-[15px]"><path d="M1 1h12v14H1z" fill="#fff" stroke="#2a3f9a" /><path d="M3 4h8M3 7h8M3 10h8M3 12h8" stroke="#2a3f9a" /></svg>
                  <span className="ml-[5px]">Files</span>
                </div>
                <div className="w-[103px] flex items-center pl-[13px] border-r border-[#dcdcdc]">
                  <svg viewBox="0 0 14 14" className="w-3 h-3"><path d="M1 6h6v7H1z" fill="#6a9ad8" stroke="#345" /><path d="M7 1h6v7H7z" fill="#e0b040" stroke="#654" /></svg>
                  <span className="ml-[6px]">Design Units</span>
                </div>
                <div className="flex-1 pl-[10px] pt-[2px]">
                  <svg viewBox="0 0 12 12" className="w-3 h-3"><path d="M1 1l10 10" stroke="#d8a030" strokeWidth="2" /><path d="M7 1l1 1M2 8l1 1M10 4l1 1" stroke="#d02040" strokeWidth="2" /></svg>
                </div>
                <div className="w-[16px] bg-[#e6e6e6] border border-[#bdbdbd] flex items-center justify-center">
                  <svg viewBox="0 0 8 12" className="w-2 h-3"><path d="M7 0v12L0 6z" fill="#a9a9a9" /></svg>
                </div>
                <div className="w-[15px] bg-[#e6e6e6] border border-[#8a8a8a] flex items-center justify-center">
                  <svg viewBox="0 0 8 12" className="w-2 h-3"><path d="M1 0v12l7-6z" fill="#000" /></svg>
                </div>
              </div>
              <div className="mt-[7px]"><PanelHead title="Tasks" /></div>
              <div className="h-[37px] flex items-center pt-[3px] shrink-0">
                <span className="w-[33px] shrink-0">Flow:</span>
                <div className="w-[198px] h-[21px] border border-[#8a8a8a] bg-[#e3e3e3] flex items-center pl-[3px] pr-[8px]">
                  <span className="flex-1">Compilation</span>
                  <svg viewBox="0 0 8 5" className="w-[8px] h-[5px]"><path d="M0 0h8L4 5z" fill="#111" /></svg>
                </div>
                <div className="w-[72px] h-[21px] ml-[8px] border border-[#a0a0a0] bg-[#e6e6e6] flex items-center justify-center">Customize...</div>
              </div>
              <div className="flex-1 min-h-0 w-[313px] bg-white border-2 border-l border-b-0 border-[#a9a9a9] flex flex-col">
                <div className="h-[23px] flex shrink-0">
                  <div className="w-[40px] border-r border-[#d8d8d8]" />
                  <div className="w-[260px] border-r border-[#d8d8d8] flex items-center justify-center">Task</div>
                  <div className="flex-1 overflow-hidden"><svg viewBox="0 0 12 12" className="w-3 h-3 mt-[7px] ml-[4px]"><circle cx="8" cy="6" r="5" fill="#cddcf0" stroke="#8ba6c8" /></svg></div>
                </div>
                {tasks.map((t) => <TaskRow key={t.name} t={t} />)}
                <div className="flex h-5 border-b border-[#d8d8d8]">
                  <div className="w-[40px] border-r border-[#d8d8d8]" />
                  <div className="w-[260px] border-r border-[#d8d8d8] flex items-center whitespace-nowrap">
                    <Icon name="progStripe" className="w-4 h-4 ml-[24px]" />
                    <span className="ml-[5px]">Program Device (Open Programmer)</span>
                  </div>
                </div>
                <div className="flex-1" />
                <Scroll thumb="w-[214px] ml-[2px]" />
              </div>
            </div>
            {/* editor */}
            <div className="w-[1606px] ml-[0px] shrink-0 flex flex-col">
              <div className="h-[25px] flex border-b-2 border-[#ababab] shrink-0 ml-[3px]">
                <div className="w-[535px] bg-white flex items-center relative">
                  <Icon name="docChip" className="w-[18px] h-[18px] ml-[12px]" />
                  <span className="flex-1 ml-[207px]">lab2ab.bdf</span>
                  <div className="w-[14px] h-[14px] bg-[#dd5a44] border border-[#b04030] flex items-center justify-center mr-[15px]">
                    <svg viewBox="0 0 8 8" className="w-2 h-2"><path d="M1 1l6 6M7 1L1 7" stroke="#fff" strokeWidth="2" /></svg>
                  </div>
                </div>
                <div className="w-[531px] flex items-center border border-[#dcdcdc] border-b-0 mt-[3px]">
                  <Icon name="prog" className="w-[18px] h-[18px] ml-[9px]" />
                  <span className="flex-1 text-center">Compilation Report - lab2ab</span>
                  <div className="w-[14px] h-[14px] bg-[#b0b0b0] border border-[#909090] flex items-center justify-center mr-[11px]">
                    <svg viewBox="0 0 8 8" className="w-2 h-2"><path d="M1 1l6 6M7 1L1 7" stroke="#fff" strokeWidth="2" /></svg>
                  </div>
                </div>
              </div>
              <div className="h-[26px] flex items-center border-b-2 border-[#ababab] shrink-0 ml-[3px] pl-[3px]">
                <Grip className="mr-[3px]" />
                <Tool name="schemSave" /><Sep />
                <Tool name="arrow" active /><Tool name="zoom" /><Tool name="hand" /><Tool name="letter" /><Tool name="gate" /><Tool name="blocks" />
                <svg viewBox="0 0 8 5" className="w-[7px] h-[5px] mx-[2px] shrink-0"><path d="M0 0h8L4 5z" fill="#222" /></svg>
                <Tool name="symbol" /><Tool name="ortho" /><Tool name="orthoB" /><Tool name="orthoC" /><Tool name="diag" /><Tool name="diagB" /><Tool name="diagC" /><Tool name="rect" /><Tool name="ell" /><Tool name="diag" /><Tool name="arc" /><Sep wide />
                <Tool name="rubber" active /><Tool name="partial" active /><Sep />
                <Tool name="flipH" /><Tool name="flipV" /><Tool name="rotate" />
                <div className="w-[2px] h-full bg-[#c4c4c4] ml-[2px] shrink-0" />
                <Grip className="mx-[3px]" />
                <Tool name="save" /><Sep wide /><Tool name="print" /><Sep />
                <Tool name="cut" /><Tool name="copy" /><Tool name="paste" /><Sep wide />
                <Tool name="undo" /><Tool name="redo" />
              </div>
              <div className="flex-1 min-h-0 flex ml-[4px]">
                <div className="relative w-[1585px] shrink-0 bg-white bg-[radial-gradient(circle_at_0.5px_0.5px,#000_0.5px,transparent_0.5px)] bg-[size:8px_8px] bg-[position:0px_4px] overflow-hidden">
                  <Schematic />
                </div>
                <div className="flex-1 border-r border-[#9aa0a8] bg-[#efefef] flex flex-col items-center pt-[6px]">
                  <svg viewBox="0 0 10 10" className="w-[10px] h-[10px] shrink-0"><path d="M1 7l4-4 4 4" fill="none" stroke="#555" strokeWidth="1.8" /></svg>
                  <div className="w-full flex-1 bg-[#cacaca] my-[4px] flex items-center justify-center"><div className="w-[10px] h-[10px] bg-[#efefef]" /></div>
                  <svg viewBox="0 0 10 10" className="w-[10px] h-[10px] shrink-0 mb-[3px]"><path d="M1 3l4 4 4-4" fill="none" stroke="#555" strokeWidth="1.8" /></svg>
                </div>
              </div>
              <Scroll className="ml-[4px] shrink-0" thumb="w-[1546px] ml-[2px]" />
            </div>
          </div>
          {/* messages */}
          <div className="flex-1 min-h-0 flex pt-[6px] pl-[3px]">
            <div className="w-[16px] h-[113px] border border-[#a9a9a9] flex flex-col items-center pt-[3px] shrink-0 bg-[#efefef]">
              <svg viewBox="0 0 12 12" className="w-3 h-3"><path d="M2 2l8 8M10 2l-8 8" stroke="#111" strokeWidth="1.6" /></svg>
              <svg viewBox="0 0 12 12" className="w-3 h-3 mt-[1px]"><path d="M4 1h7v7H4zM1 4h7v7H1z" fill="#efefef" stroke="#222" /></svg>
              <svg viewBox="0 0 12 12" className="w-3 h-3 mt-[1px]"><path d="M4 1h4v6H4zM2 7h8M6 7v5" fill="none" stroke="#222" /></svg>
              <span className="mt-auto mb-[2px] [writing-mode:vertical-rl] rotate-180">Messages</span>
            </div>
            <div className="flex-1 min-w-0 flex flex-col ml-[4px] mr-[3px]">
              <div className="h-[24px] flex items-center shrink-0">
                <div className="w-[24px] h-[22px] bg-[#cce8ff] border border-[#99d1ff] flex items-center justify-center">All</div>
                <div className="flex items-center ml-[6px] border border-[#e0e0e0] h-[22px] gap-[6px] w-[82px] pl-[1px]">
                  <div className="w-[20px] h-[20px] bg-[#dcdcdc] border border-[#b0b0b0] flex items-center justify-center">
                    <svg viewBox="0 0 16 16" className="w-4 h-4"><circle cx="8" cy="8" r="7" fill="#e04050" stroke="#b02030" /><path d="M5 5l6 6M11 5l-6 6" stroke="#fff" strokeWidth="2" /></svg>
                  </div>
                  <div className="relative w-[20px] h-[20px] bg-[#dcdcdc] border border-[#b0b0b0] flex items-center justify-center">
                    <svg viewBox="0 0 16 16" className="w-4 h-4"><path d="M8 1l7 13H1z" fill="#c080e0" stroke="#8040b0" /><path d="M6 7l4 5M10 7l-4 5" stroke="#fff" strokeWidth="1.5" /></svg>
                    <span className="absolute -top-[5px] -right-[6px] w-[10px] h-[13px] rounded-full bg-[#1f6fd8] text-white text-[10px] leading-[13px] text-center">5</span>
                  </div>
                  <div className="relative w-[20px] h-[20px] bg-[#dcdcdc] border border-[#b0b0b0] flex items-center justify-center">
                    <svg viewBox="0 0 16 16" className="w-4 h-4"><path d="M8 1l7 13H1z" fill="#f5c842" stroke="#c07a10" /><path d="M8 5v5M8 11v2" stroke="#c05010" strokeWidth="1.5" /></svg>
                    <span className="absolute -top-[5px] -right-[6px] w-[10px] h-[13px] rounded-full bg-[#1f6fd8] text-white text-[10px] leading-[13px] text-center">5</span>
                  </div>
                </div>
                <div className="w-[20px] h-[20px] ml-[2px] bg-[#dcdcdc] border border-[#b0b0b0] flex items-center justify-center">
                  <svg viewBox="0 0 16 16" className="w-4 h-4"><path d="M2 14L12 4" stroke="#667" /><path d="M11 3c3 3 3 8 0 10-3-2-3-6 0-10z" fill="#4f8ae0" /></svg>
                </div>
                <div className="w-[340px] h-[23px] ml-[13px] bg-white border border-[#777] flex items-center pl-[4px] pr-[3px]">
                  <svg viewBox="0 0 16 16" className="w-4 h-4"><path d="M1 2h14L10 8v6l-4-2V8z" fill="#e8a030" stroke="#a07020" /></svg>
                  <span className="ml-[7px] text-[#777]">&lt;&lt;Search&gt;&gt;</span>
                  <svg viewBox="0 0 12 8" className="w-3 h-2 ml-auto"><path d="M1 1l5 5 5-5" fill="none" stroke="#222" strokeWidth="1.6" /></svg>
                </div>
              </div>
              <div className="h-[74px] mt-[3px] bg-white border-2 border-[#a9a9a9] flex shrink-0 ml-[0px]">
                <div className="flex-1 min-w-0 flex flex-col">
                  <div className="h-[23px] flex items-center font-['Liberation_Mono'] text-[13.33px] shrink-0">
                    <div className="w-[41px] pl-[4px] border-r border-[#dcdcdc] h-full flex items-center">Type</div>
                    <div className="w-[56px] pl-[20px] border-r border-[#dcdcdc] h-full flex items-center">ID</div>
                    <div className="pl-[4px]">Message</div>
                  </div>
                  <div className="flex items-center h-[20px] font-['Liberation_Mono'] text-[13.33px] text-[#008000] whitespace-nowrap shrink-0">
                    <svg viewBox="0 0 16 18" className="w-[16px] h-[18px] ml-[23px] shrink-0"><path d="M8 1a7 7 0 017 7 7 7 0 01-5 6l-2 3-2-3a7 7 0 01-5-6 7 7 0 017-7z" fill="#d8e6fa" stroke="#7a9ccc" /><path d="M8 4v1M8 7v5" stroke="#2a5fb0" strokeWidth="2" /></svg>
                    <span className="ml-[5px]">293000</span>
                    <span className="ml-[4px]">Quartus II Full Compilation was successful. 0 errors, 10 warnings</span>
                  </div>
                  <div className="flex-1" />
                  <Scroll className="shrink-0" thumb="w-[1704px] ml-[2px]" />
                </div>
                <div className="w-[18px] bg-[#efefef] flex flex-col items-center shrink-0 pb-[17px]">
                  <div className="w-[16px] flex-1 bg-[#cacaca]" />
                  <svg viewBox="0 0 10 10" className="w-[10px] h-[10px] shrink-0 mt-[2px]"><path d="M1 3l4 4 4-4" fill="none" stroke="#555" strokeWidth="1.8" /></svg>
                </div>
              </div>
              <div className="flex shrink-0 -mt-[1px] ml-[0px] h-[16px]">
                <div className="w-[78px] border-b border-x border-[#444] rounded-b-[3px] skew-x-[8deg] flex items-center justify-center"><span className="-skew-x-[8deg]">System (12)</span></div>
                <div className="w-[98px] ml-[6px] border-b border-x border-[#444] rounded-b-[3px] bg-white skew-x-[8deg] flex items-center justify-center"><span className="-skew-x-[8deg]">Processing (106)</span></div>
                <div className="ml-auto flex items-center mt-[13px] h-[20px]">
                  <span className="w-[51px]">2, 108</span>
                  <span className="w-px h-[16px] bg-[#c8c8c8] mr-[4px]" />
                  <span className="w-[57px]">100%</span>
                  <span className="-mr-[3px]">00:00:31</span>
                </div>
              </div>
            </div>
          </div>
        </div>
        <div className="h-10 bg-[#1f1c18] flex items-center shrink-0 relative">
          <TaskApps />
          <div className="ml-auto flex items-center h-full text-white">
            <svg viewBox="0 0 16 16" className="w-4 h-4"><circle cx="10" cy="4" r="3" fill="none" stroke="#fff" /><circle cx="5" cy="7" r="2.500" fill="none" stroke="#fff" /><path d="M1 15c0-6 8-6 8 0M9 9c3 0 5 2 5 5" fill="none" stroke="#fff" /></svg>
            <svg viewBox="0 0 12 7" className="w-3 h-[7px] ml-[22px]"><path d="M1 6l5-5 5 5" fill="none" stroke="#fff" strokeWidth="1.2" /></svg>
            <svg viewBox="0 0 16 16" className="w-4 h-4 ml-[11px]"><path d="M1 2h14v10H1zM8 12v3M4 15h8M5 2v4H1" fill="none" stroke="#fff" /></svg>
            <svg viewBox="0 0 16 16" className="w-4 h-4 ml-[7px]"><path d="M1 6h3l4-4v12l-4-4H1zM11 6l4 4M15 6l-4 4" fill="none" stroke="#fff" /></svg>
            <span className="ml-[10px]">ENG</span>
            <div className="ml-[12px]"><Clock /></div>
            <div className="relative ml-[18px] mr-[19px]">
              <svg viewBox="0 0 16 16" className="w-4 h-4"><path d="M1 1h14v11h-6l-3 3v-3H1z" fill="#fff" /><path d="M3 4h10M3 6.500h10M3 9h6" stroke="#1f1c18" /></svg>
              <span className="absolute top-[9px] left-[6px] w-[16px] h-[16px] rounded-full bg-[#3a3a3a] border border-[#888] text-[11px] leading-[14px] text-center">1</span>
            </div>
            <div className="w-px h-full bg-[#6a6a6a]" />
            <div className="w-[4px]" />
          </div>
        </div>
      </div>
      {/* right screen */}
      <div className="w-[1920px] h-full shrink-0 flex flex-col">
        <div className="flex-1 min-h-0 bg-[#7f7461] flex flex-col">
          <InfoBlock />
          <Podcast />
          <Ottawa />
        </div>
        <div className="h-10 bg-[#1f1c18] flex items-center shrink-0">
          <TaskApps />
          <div className="ml-auto mr-[13px]"><Clock /></div>
        </div>
      </div>
    </div>
  );
}
